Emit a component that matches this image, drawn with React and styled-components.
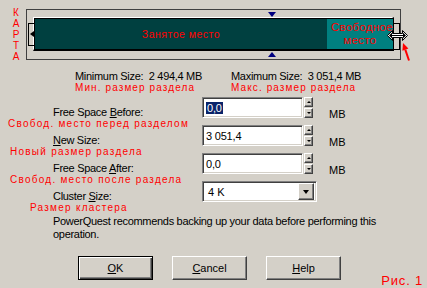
import React from "react";
import styled, { createGlobalStyle, css } from "styled-components";

const GlobalStyle = createGlobalStyle`
  html, body {
    margin: 0;
    padding: 0;
    background: #d4d0c8;
  }
  body {
    font-family: "Liberation Sans", Arial, sans-serif;
    font-size: 11px;
    color: #000;
  }
`;

const RED = "#ff0000";

const Dialog = styled.div`
  width: 427px;
  height: 288px;
  background: #d4d0c8;
  display: flex;
  flex-direction: column;
  overflow: hidden;
`;

/* ---------- partition map ---------- */

const MapRow = styled.div`
  display: flex;
  margin-top: 9px;
`;

const MapCaption = styled.div`
  width: 20px;
  padding-left: 6px;
  margin-top: -2px;
  display: flex;
  flex-direction: column;
  align-items: center;
  color: ${RED};
  font-size: 10px;
  line-height: 11px;
`;

const MapFrame = styled.div`
  position: relative;
  width: 375px;
  height: 51px;
  box-sizing: border-box;
  border: 1px solid #404040;
  padding: 7px 6px 8px 6px;
`;

const UsageBar = styled.div`
  height: 100%;
  box-sizing: border-box;
  border-top: 1px solid #fff;
  border-left: 1px solid #fff;
  border-right: 2px solid #000;
  border-bottom: 2px solid #000;
`;

const BarInner = styled.div`
  display: flex;
  height: 100%;
  box-sizing: border-box;
  border-top: 1px solid #000;
  border-left: 1px solid #000;
`;

const Segment = styled.div`
  flex: 0 0 ${p => p.$width}px;
  background: ${p => p.$color};
  display: flex;
  flex-direction: column;
  align-items: center;
  justify-content: center;
  overflow: visible;
  color: ${RED};
  white-space: nowrap;
  font-size: ${p => p.$size}px;
  line-height: ${p => p.$lead}px;
  letter-spacing: ${p => p.$spacing}px;
`;

const Stub = styled.div`
  position: absolute;
  top: 13px;
  height: ${p => p.$height}px;
  box-sizing: border-box;
  border: 1px solid #000;
  ${p =>
    p.$side === "left"
      ? css`
          left: 1px;
          width: 6px;
          border-right: none;
        `
      : css`
          left: 366px;
          width: 7px;
          border-left: none;
        `}
`;

const StubArrow = styled.div`
  position: absolute;
  left: 1px;
  top: 7px;
  width: 0;
  height: 0;
  border-top: 3px solid transparent;
  border-bottom: 3px solid transparent;
  border-right: 4px solid #000;
`;

const Marker = styled.div`
  position: absolute;
  left: 241px;
  width: 0;
  height: 0;
  border-left: 4px solid transparent;
  border-right: 4px solid transparent;
  ${p =>
    p.$up
      ? css`
          top: 42px;
          border-bottom: 5px solid #000080;
        `
      : css`
          top: 2px;
          border-top: 5px solid #000080;
        `}
`;

const Overlay = styled.svg`
  position: absolute;
  left: ${p => p.$x}px;
  top: ${p => p.$y}px;
  overflow: visible;
`;

/* ---------- min / max sizes ---------- */

const StatsRow = styled.div`
  display: grid;
  grid-template-columns: 156px auto;
  padding-left: 75px;
  margin-top: 8px;
`;

const Stat = styled.div`
  display: flex;
  flex-direction: column;
`;

const StatText = styled.div`
  white-space: pre;
  line-height: 12px;
  letter-spacing: -0.3px;
`;

const Annotation = styled.div`
  color: ${RED};
  font-size: 10px;
  line-height: 11px;
  letter-spacing: ${p => p.$spacing ?? 1.25}px;
  white-space: nowrap;
  margin-left: ${p => p.$indent ?? 0}px;
`;

/* ---------- form ---------- */

const Form = styled.div`
  display: grid;
  grid-template-columns: 202px 1fr;
  grid-auto-rows: 28px;
  margin-top: 4px;
`;

const LabelCell = styled.div`
  padding-top: 9px;
  display: flex;
  flex-direction: column;
`;

const FieldLabel = styled.div`
  padding-left: 53px;
  line-height: 12px;
  letter-spacing: -0.3px;
  white-space: nowrap;
`;

const ControlCell = styled.div`
  display: flex;
  align-items: flex-start;
`;

const sunken = css`
  box-sizing: border-box;
  background: #fff;
  border-style: solid;
  border-width: 1px;
  border-color: #808080 #fff #fff #808080;
  box-shadow: inset 1px 1px 0 #404040, inset -1px -1px 0 #d4d0c8;
`;

const TextBox = styled.div`
  ${sunken};
  width: 101px;
  height: 21px;
  padding: 0 3px;
  display: flex;
  align-items: center;
  line-height: 12px;
  letter-spacing: -0.2px;
`;

const Selected = styled.span`
  background: #0a246a;
  color: #fff;
  padding: 0 1px;
  line-height: 12px;
`;

const Spinner = styled.div`
  width: 9px;
  height: 21px;
  margin-left: 1px;
  display: flex;
  flex-direction: column;
  gap: 1px;
`;

const raised = css`
  box-sizing: border-box;
  background: #d4d0c8;
  border-style: solid;
  border-width: 1px;
  border-color: #fff #404040 #404040 #fff;
  box-shadow: inset -1px -1px 0 #808080;
`;

const SpinButton = styled.div`
  ${raised};
  flex: 1;
  display: flex;
  align-items: center;
  justify-content: center;
`;

const Triangle = styled.div`
  width: 0;
  height: 0;
  border-left: ${p => p.$w}px solid transparent;
  border-right: ${p => p.$w}px solid transparent;
  ${p =>
    p.$up
      ? css`
          border-bottom: ${p.$h}px solid #000;
        `
      : css`
          border-top: ${p.$h}px solid #000;
        `}
`;

const Unit = styled.div`
  margin-left: 16px;
  padding-top: 11px;
  line-height: 12px;
`;

const ComboBox = styled.div`
  ${sunken};
  width: 115px;
  height: 21px;
  padding: 2px 2px 2px 5px;
  display: flex;
  align-items: center;
  justify-content: space-between;
  line-height: 12px;
`;

const ComboButton = styled.div`
  ${raised};
  width: 16px;
  height: 17px;
  display: flex;
  align-items: center;
  justify-content: center;
`;

/* ---------- footer ---------- */

const Hint = styled.div`
  padding-left: 53px;
  margin-top: 6px;
  line-height: 13px;
  letter-spacing: -0.3px;
  white-space: nowrap;
`;

const ButtonRow = styled.div`
  display: flex;
  align-items: flex-start;
  gap: 19px;
  padding-left: 78px;
  margin-top: 15px;
`;

const PushButton = styled.div`
  box-sizing: border-box;
  width: 75px;
  height: 24px;
  display: flex;
  align-items: center;
  justify-content: center;
  background: #d4d0c8;
  line-height: 12px;
  ${p =>
    p.$default
      ? css`
          border: 1px solid #000;
          box-shadow: inset 1px 1px 0 #fff, inset -1px -1px 0 #404040,
            inset -2px -2px 0 #808080;
        `
      : css`
          border-style: solid;
          border-width: 1px;
          border-color: #fff #404040 #404040 #fff;
          box-shadow: inset -1px -1px 0 #808080;
        `}
`;

const FigureLabel = styled.div`
  margin-left: auto;
  margin-right: 4px;
  margin-top: 17px;
  color: ${RED};
  font-size: 13px;
  line-height: 15px;
  letter-spacing: 0.8px;
`;

const fields = [
  {
    label: (
      <>
        Free Space <u>B</u>efore:
      </>
    ),
    note: "Свобод. место перед разделом",
    indent: 8,
    value: <Selected>0,0</Selected>,
  },
  {
    label: (
      <>
        <u>N</u>ew Size:
      </>
    ),
    note: "Новый размер раздела",
    indent: 10,
    value: "3 051,4",
  },
  {
    label: (
      <>
        Free Space <u>A</u>fter:
      </>
    ),
    note: "Свобод. место после раздела",
    indent: 10,
    value: "0,0",
  },
];

export default function App() {
  return (
    <Dialog>
      <GlobalStyle />

      <MapRow>
        <MapCaption>
          {"КАРТА".split("").map((ch, i) => (
            <span key={i}>{ch}</span>
          ))}
        </MapCaption>
        <MapFrame>
          <UsageBar>
            <BarInner>
              <Segment $width={292} $color="#004040" $size={10.5} $lead={12} $spacing={0.5}>
                Занятое место
              </Segment>
              <Segment $width={65} $color="#008080" $size={11.5} $lead={13} $spacing={0.3}>
                <span style={{ marginLeft: 4 }}>Свободное</span>
                <span>место</span>
              </Segment>
            </BarInner>
          </UsageBar>
          <Stub $side="left" $height={23}>
            <StubArrow />
          </Stub>
          <Stub $side="right" $height={27} />
          <Marker />
          <Marker $up />
          <Overlay $x={360} $y={20} width="22" height="12" viewBox="0 0 22 12">
            <polygon
              points="0.5,5.5 5.5,0.5 5.5,3.5 15.5,3.5 15.5,0.5 20.5,5.5 15.5,10.5 15.5,7.5 5.5,7.5 5.5,10.5"
              fill="#fff"
              stroke="#000"
              strokeWidth="1"
            />
            <polygon points="2,5.5 5,2.5 5,8.5" fill="#000" />
            <polygon points="19,5.5 16,2.5 16,8.5" fill="#000" />
            <line x1="5" y1="5.5" x2="16" y2="5.5" stroke="#000" strokeWidth="1" />
          </Overlay>
          <Overlay $x={371} $y={30} width="14" height="22" viewBox="0 0 14 22">
            <line x1="7.3" y1="9.6" x2="11" y2="20.5" stroke={RED} strokeWidth="2" />
            <polygon points="5,3 10.4,8.6 4.4,10.8" fill={RED} />
          </Overlay>
        </MapFrame>
      </MapRow>

      <StatsRow>
        <Stat>
          <StatText>{"Minimum Size:  2 494,4 MB"}</StatText>
          <Annotation $spacing={1.1}>Мин. размер раздела</Annotation>
        </Stat>
        <Stat>
          <StatText>{"Maximum Size:  3 051,4 MB"}</StatText>
          <Annotation $spacing={1.1}>Макс. размер раздела</Annotation>
        </Stat>
      </StatsRow>

      <Form>
        {fields.map((f, i) => (
          <React.Fragment key={i}>
            <LabelCell>
              <FieldLabel>{f.label}</FieldLabel>
              <Annotation $indent={f.indent}>{f.note}</Annotation>
            </LabelCell>
            <ControlCell>
              <TextBox>{f.value}</TextBox>
              <Spinner>
                <SpinButton>
                  <Triangle $up $w={2} $h={2} />
                </SpinButton>
                <SpinButton>
                  <Triangle $w={2} $h={2} />
                </SpinButton>
              </Spinner>
              <Unit>MB</Unit>
            </ControlCell>
          </React.Fragment>
        ))}
        <LabelCell>
          <FieldLabel>
            Cluster <u>S</u>ize:
          </FieldLabel>
          <Annotation $indent={30}>Размер кластера</Annotation>
        </LabelCell>
        <ControlCell>
          <ComboBox>
            <span>4 K</span>
            <ComboButton>
              <Triangle $w={3} $h={4} />
            </ComboButton>
          </ComboBox>
        </ControlCell>
      </Form>

      <Hint>
        PowerQuest recommends backing up your data before performing this
        <br />
        operation.
      </Hint>

      <ButtonRow>
        <PushButton $default>
          <span>
            <u>O</u>K
          </span>
        </PushButton>
        <PushButton>
          <span>
            <u>C</u>ancel
          </span>
        </PushButton>
        <PushButton>
          <span>
            <u>H</u>elp
          </span>
        </PushButton>
        <FigureLabel>Рис. 1</FigureLabel>
      </ButtonRow>
    </Dialog>
  );
}
